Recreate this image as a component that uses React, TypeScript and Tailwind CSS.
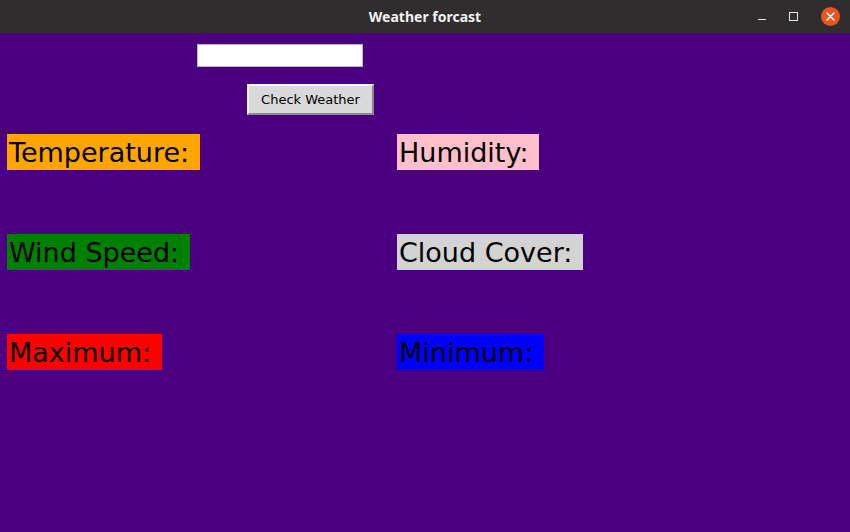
const labels = [
  { text: 'Temperature: ', bg: 'bg-[#ffa500]' },
  { text: 'Humidity: ', bg: 'bg-[#ffc0cb]' },
  { text: 'Wind Speed: ', bg: 'bg-[#008000]' },
  { text: 'Cloud Cover: ', bg: 'bg-[#d3d3d3]' },
  { text: 'Maximum: ', bg: 'bg-[#ff0000]' },
  { text: 'Minimum: ', bg: 'bg-[#0000ff]' },
]

function TitleBar() {
  return (
    <div className="relative flex h-[33px] items-center justify-center bg-[#2f2d2d]">
      <span className="text-[14px] font-bold text-[#f2f2f2] [font-family:'Noto_Sans',sans-serif]">
        Weather forcast
      </span>
      <div className="absolute right-[10px] top-0 flex h-full items-center gap-[23px]">
        <span className="mt-[6px] h-[1px] w-[8px] bg-[#e6e6e6]" />
        <span className="h-[9px] w-[9px] border border-[#e6e6e6]" />
        <span className="flex h-[19px] w-[19px] items-center justify-center rounded-full bg-[#e95420]">
          <svg width="9" height="9" viewBox="0 0 9 9">
            <path d="M1 1L8 8M8 1L1 8" stroke="#fff" strokeWidth="1.5" strokeLinecap="round" />
          </svg>
        </span>
      </div>
    </div>
  )
}

export default function App() {
  return (
    <div className="flex h-[532px] w-[850px] flex-col overflow-hidden bg-[#4b0082] [font-family:'DejaVu_Sans',sans-serif]">
      <TitleBar />
      <div className="flex flex-col items-start pl-[197px] pt-[11px]">
        <input
          type="text"
          className="h-[23px] w-[166px] border border-[#b8b8b8] bg-white px-1 text-[14px] outline-none"
        />
        <button className="ml-[50px] mt-[17px] h-[31px] w-[127px] border-2 border-t-[#f4f4f4] border-l-[#f4f4f4] border-b-[#8a8a8a] border-r-[#8a8a8a] bg-[#d9d9d9] text-[13px] text-black">
          Check Weather
        </button>
      </div>
      <div className="grid grid-cols-[390px_1fr] gap-y-[64px] pl-[7px] pt-[19px]">
        {labels.map((l) => (
          <div key={l.text} className="flex">
            <span
              className={`${l.bg} flex h-[36px] items-center whitespace-pre px-[2px] text-[27px] leading-none text-black`}
            >
              {l.text}
            </span>
          </div>
        ))}
      </div>
    </div>
  )
}
